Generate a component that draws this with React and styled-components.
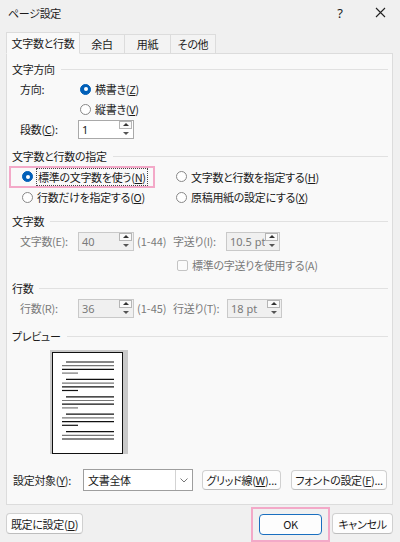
import React from 'react';
import styled, { createGlobalStyle, css } from 'styled-components';

const Global = createGlobalStyle`
  html, body { margin: 0; padding: 0; }
  body {
    background: #f0f0f0;
    font-family: "Noto Sans CJK JP", "Noto Sans", sans-serif;
    font-size: 11px;
    font-feature-settings: "palt";
    letter-spacing: -0.3px;
    color: #1b1b1b;
  }
`;

const Window = styled.div`
  width: 400px;
  height: 542px;
  background: #f0f0f0;
  overflow: hidden;
`;

const TitleBar = styled.div`
  height: 25px;
  display: flex;
  align-items: center;
  padding: 0 0 0 8px;
`;

const Title = styled.div`
  flex: 1;
  font-size: 11px;
`;

const TitleIcon = styled.div`
  width: 40px;
  display: flex;
  justify-content: center;
  align-items: center;
  font-size: 13px;
  font-family: "Noto Sans", sans-serif;
`;

const Tabs = styled.div`
  display: flex;
  align-items: flex-end;
  margin: 7px 0 -1px 6px;
  position: relative;
  z-index: 1;
`;

const Tab = styled.div`
  height: ${p => (p.$active ? 22 : 20)}px;
  width: ${p => p.$w}px;
  box-sizing: border-box;
  display: flex;
  align-items: center;
  justify-content: center;
  border: 1px solid #dcdcdc;
  border-left: ${p => (p.$first ? '1px solid #dcdcdc' : 'none')};
  background: ${p => (p.$active ? '#f9f9f9' : '#f3f3f3')};
  ${p => p.$active && css`border-bottom-color: #f9f9f9;`}
`;

const Panel = styled.div`
  margin-left: 6px;
  width: 387px;
  height: 452px;
  box-sizing: border-box;
  border: 1px solid #dcdcdc;
  background: #f9f9f9;
  padding: 5px 4px 0 5px;
`;

const GroupHead = styled.div`
  height: 20px;
  display: flex;
  align-items: center;
  gap: 6px;
  margin-top: ${p => p.$mt || 0}px;
  &::after {
    content: '';
    flex: 1;
    height: 1px;
    background: #e1e1e1;
  }
`;

const Row = styled.div`
  height: ${p => p.$h || 20}px;
  display: flex;
  align-items: center;
  padding-left: ${p => (p.$pl != null ? p.$pl : 8)}px;
  margin-top: ${p => p.$mt || 0}px;
  color: ${p => (p.$disabled ? '#7a7a7a' : 'inherit')};
`;

const RadioGrid = styled.div`
  height: ${p => p.$h || 20}px;
  display: grid;
  grid-template-columns: 154px auto;
  align-items: center;
  justify-items: start;
  padding-left: 10px;
`;

const Label = styled.div`
  width: ${p => p.$w || 58}px;
  flex-shrink: 0;
`;

const RadioItem = styled.label`
  display: flex;
  align-items: center;
  gap: 4px;
  margin-left: ${p => p.$ml || 0}px;
  position: relative;
  ${p => p.$highlight && css`
    &::after {
      content: '';
      position: absolute;
      left: -13px;
      right: -8px;
      top: 50%;
      margin-top: -11px;
      height: 18px;
      border: 2px solid #f3a9c8;
    }
  `}
`;

const RadioDot = styled.span`
  width: 11px;
  height: 11px;
  box-sizing: border-box;
  border-radius: 50%;
  flex-shrink: 0;
  ${p => (p.$checked
    ? css`
      background: #005fb8;
      border: 1px solid #005fb8;
      display: flex;
      align-items: center;
      justify-content: center;
      &::before {
        content: '';
        width: 4px;
        height: 4px;
        border-radius: 50%;
        background: #fff;
      }
    `
    : css`
      background: #fff;
      border: 1px solid #888;
    `)}
`;

const FocusText = styled.span`
  outline: 1px dotted #444;
  outline-offset: 0;
  padding: 0 1px;
`;

const CheckBox = styled.span`
  width: 11px;
  height: 11px;
  box-sizing: border-box;
  border: 1px solid #c4c4c4;
  border-radius: 2px;
  background: #fbfbfb;
  margin-right: 4px;
`;

const Spin = styled.div`
  width: ${p => p.$w || 56}px;
  height: 19px;
  box-sizing: border-box;
  border: 1px solid ${p => (p.$disabled ? '#c9c9c9' : '#a9a9a9')};
  background: ${p => (p.$disabled ? '#f0f0f0' : '#fff')};
  color: ${p => (p.$disabled ? '#7a7a7a' : '#1b1b1b')};
  display: flex;
  align-items: center;
  flex-shrink: 0;
`;

const SpinValue = styled.div`
  flex: 1;
  min-width: 0;
  padding-left: 3px;
  font-family: "Noto Sans", sans-serif;
  font-size: 11px;
  letter-spacing: 0;
  white-space: nowrap;
  overflow: hidden;
`;

const SpinBtns = styled.div`
  width: 13px;
  height: 17px;
  display: flex;
  flex-direction: column;
  margin-right: 1px;
  flex-shrink: 0;
`;

const SpinBtn = styled.div`
  flex: 1;
  box-sizing: border-box;
  border: 1px solid ${p => (p.$boxed ? '#b5b5b5' : 'transparent')};
  background: ${p => (p.$boxed ? '#fafafa' : 'transparent')};
  display: flex;
  align-items: center;
  justify-content: center;
  &::before {
    content: '';
    width: 0;
    height: 0;
    border-left: 3px solid transparent;
    border-right: 3px solid transparent;
    ${p => (p.$down
      ? css`border-top: 3px solid #555;`
      : css`border-bottom: 3px solid #333;`)}
  }
`;

const Range = styled.div`
  width: 39px;
  padding-left: 3px;
  flex-shrink: 0;
  box-sizing: border-box;
  white-space: nowrap;
  letter-spacing: 0;
`;

const PreviewFrame = styled.div`
  margin: 4px 0 0 38px;
  width: 78px;
  height: 104px;
  background: #c9c9c9;
  box-sizing: border-box;
  padding: 2px 5px 0 2px;
`;

const Page = styled.div`
  width: 71px;
  height: 102px;
  box-sizing: border-box;
  border: 1px solid #111;
  background: #fff;
  overflow: hidden;
`;

const Select = styled.div`
  width: 110px;
  height: 22px;
  box-sizing: border-box;
  border: 1px solid #9e9e9e;
  background: #fff;
  display: flex;
  align-items: center;
`;

const SelectText = styled.div`
  flex: 1;
  padding-left: 4px;
`;

const SelectArrow = styled.div`
  width: 16px;
  height: 100%;
  border-left: 1px solid #d3d3d3;
  display: flex;
  align-items: center;
  justify-content: center;
`;

const Button = styled.button`
  font: inherit;
  letter-spacing: inherit;
  color: #1b1b1b;
  height: ${p => p.$h || 21}px;
  width: ${p => p.$w}px;
  margin-left: ${p => p.$ml || 0}px;
  padding: 0;
  background: #fdfdfd;
  border: 1px solid ${p => (p.$primary ? '#1a6fc0' : '#d0d0d0')};
  border-bottom-color: ${p => (p.$primary ? '#1a6fc0' : '#bdbdbd')};
  border-radius: 4px;
  flex-shrink: 0;
  white-space: nowrap;
`;

const Footer = styled.div`
  height: 37px;
  display: flex;
  align-items: center;
  padding-left: 6px;
`;

const OkHighlight = styled.div`
  margin-left: 168px;
  margin-top: 1px;
  width: 79px;
  height: 35px;
  box-sizing: border-box;
  border: 2px solid #f3a9c8;
  display: flex;
  align-items: center;
  justify-content: center;
`;

function Radio({ checked, children, ml, highlight, focus }) {
  return (
    <RadioItem $ml={ml} $highlight={highlight}>
      <RadioDot $checked={checked} />
      {focus ? <FocusText>{children}</FocusText> : <span>{children}</span>}
    </RadioItem>
  );
}

function SpinBox({ value, disabled, w }) {
  return (
    <Spin $disabled={disabled} $w={w}>
      <SpinValue>{value}</SpinValue>
      <SpinBtns>
        <SpinBtn $boxed />
        <SpinBtn $down />
      </SpinBtns>
    </Spin>
  );
}

function PreviewPage() {
  const paras = [0, 1, 2, 3, 4];
  return (
    <Page>
      <svg width="69" height="100" viewBox="0 0 69 100">
        {paras.map(i => {
          const y = 9 + i * 17.4;
          return (
            <g key={i} strokeWidth="1.2">
              <line x1="13" x2="61" y1={y} y2={y} stroke="#111" />
              <line x1="9" x2="61" y1={y + 3.7} y2={y + 3.7} stroke="#777" />
              <line x1="9" x2="61" y1={y + 7.4} y2={y + 7.4} stroke="#111" />
              {i < 4 && (
                <line x1="9" x2="25" y1={y + 11.1} y2={y + 11.1} stroke={i % 2 ? '#111' : '#777'} />
              )}
            </g>
          );
        })}
      </svg>
    </Page>
  );
}

export default function App() {
  return (
    <Window>
      <Global />
      <TitleBar>
        <Title>ページ設定</Title>
        <TitleIcon>?</TitleIcon>
        <TitleIcon>
          <svg width="11" height="11" viewBox="0 0 11 11">
            <path d="M1 1L10 10M10 1L1 10" stroke="#222" strokeWidth="1.1" />
          </svg>
        </TitleIcon>
      </TitleBar>

      <Tabs>
        <Tab $active $first $w={74}>文字数と行数</Tab>
        <Tab $w={45}>余白</Tab>
        <Tab $w={46}>用紙</Tab>
        <Tab $w={45}>その他</Tab>
      </Tabs>

      <Panel>
        <GroupHead>文字方向</GroupHead>
        <Row>
          <Label>方向:</Label>
          <Radio checked ml={2}>横書き(<u>Z</u>)</Radio>
        </Row>
        <Row>
          <Label />
          <Radio ml={2}>縦書き(<u>V</u>)</Radio>
        </Row>
        <Row>
          <Label>段数(<u>C</u>):</Label>
          <SpinBox value="1" />
        </Row>

        <GroupHead $mt={7}>文字数と行数の指定</GroupHead>
        <RadioGrid $h={21}>
          <Radio checked highlight focus>標準の文字数を使う(<u>N</u>)</Radio>
          <Radio>文字数と行数を指定する(<u>H</u>)</Radio>
        </RadioGrid>
        <RadioGrid>
          <Radio>行数だけを指定する(<u>O</u>)</Radio>
          <Radio>原稿用紙の設定にする(<u>X</u>)</Radio>
        </RadioGrid>

        <GroupHead $mt={4}>文字数</GroupHead>
        <Row $disabled>
          <Label>文字数(E):</Label>
          <SpinBox value="40" disabled />
          <Range>(1-44)</Range>
          <Label $w={53}>字送り(I):</Label>
          <SpinBox value="10.5 pt" disabled w={54} />
        </Row>
        <Row $disabled $mt={4} $pl={165}>
          <CheckBox />
          標準の字送りを使用する(A)
        </Row>

        <GroupHead $mt={3}>行数</GroupHead>
        <Row $disabled>
          <Label>行数(R):</Label>
          <SpinBox value="36" disabled />
          <Range>(1-45)</Range>
          <Label $w={54}>行送り(T):</Label>
          <SpinBox value="18 pt" disabled w={55} />
        </Row>

        <GroupHead $mt={8}>プレビュー</GroupHead>
        <PreviewFrame>
          <PreviewPage />
        </PreviewFrame>

        <Row $pl={1} $h={22} $mt={15}>
          <Label $w={70}>設定対象(<u>Y</u>):</Label>
          <Select>
            <SelectText>文書全体</SelectText>
            <SelectArrow>
              <svg width="8" height="5" viewBox="0 0 8 5">
                <path d="M0.5 0.5L4 4L7.5 0.5" fill="none" stroke="#777" strokeWidth="1" />
              </svg>
            </SelectArrow>
          </Select>
          <Button $w={79} $h={20} $ml={9}>グリッド線(<u>W</u>)...</Button>
          <Button $w={96} $h={20} $ml={10}>フォントの設定(<u>F</u>)...</Button>
        </Row>
      </Panel>

      <Footer>
        <Button $w={77}>既定に設定(<u>D</u>)</Button>
        <OkHighlight>
          <Button $w={63} $h={21} $primary>OK</Button>
        </OkHighlight>
        <Button $w={61} $ml={2}>キャンセル</Button>
      </Footer>
    </Window>
  );
}
